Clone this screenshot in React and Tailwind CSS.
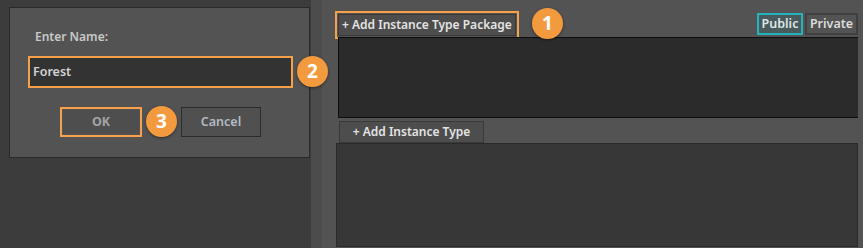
import React from 'react';

const font = { fontFamily: '"Noto Sans", "Open Sans", sans-serif' };

const Marker = ({ n, className }) => (
    <div
        className={`absolute w-[31px] h-[31px] rounded-full bg-[#f49a3e] text-white font-bold text-[19px] leading-none flex items-center justify-center shadow-[0_1px_3px_rgba(0,0,0,0.45)] ${className}`}
    >
        {n}
    </div>
);

const App = () => {
    return (
        <div className="relative w-[863px] h-[248px] flex bg-[#3c3c3c] overflow-hidden select-none" style={font}>
            {/* Name dialog */}
            <div className="w-[311px] shrink-0 pl-[9px] pt-[7px]">
                <div className="w-[301px] h-[151px] bg-[#535353] border border-[#2a2a2a] flex flex-col">
                    <div className="pl-[25px] pt-[21px] text-[12px] font-semibold text-[#c9c9c9] leading-4">Enter Name:</div>
                    <div className="ml-[18px] mt-[11px] w-[265px] h-[32px] border-2 border-[#f5a04a] bg-[#333333] flex items-center pl-[3px] text-[12.5px] font-semibold text-[#d2d2d2]">
                        Forest
                    </div>
                    <div className="flex mt-[19px] ml-[50px] gap-[39px]">
                        <div className="w-[82px] h-[30px] border-2 border-[#f5a04a] p-[1px]">
                            <div className="w-full h-full bg-[#4e4e4e] flex items-center justify-center text-[12.5px] font-bold text-[#a3a3a3]">OK</div>
                        </div>
                        <div className="w-[80px] h-[30px] border border-[#2b2b2b] bg-[#505050] flex items-center justify-center text-[12.5px] font-semibold text-[#b4bbc2]">
                            Cancel
                        </div>
                    </div>
                </div>
            </div>

            {/* splitter */}
            <div className="w-[11px] shrink-0 bg-[#4c4c4c]" />

            {/* Instance type panels */}
            <div className="flex-1 bg-[#535353] pl-[16px] pr-[5px] flex flex-col">
                <div className="flex items-end h-[37px]">
                    <div className="ml-[-3px] mb-[-2px] border-2 border-[#f5a04a] p-[1px]">
                        <div className="h-[22px] px-[3px] bg-[#4d4d4d] border border-[#3a3a3a] flex items-center text-[12px] font-semibold text-[#e4e4e4] whitespace-nowrap">
                            + Add Instance Type Package
                        </div>
                    </div>
                    <div className="ml-auto flex gap-[2px] mb-[2px]">
                        <div className="w-[46px] h-[22px] border-2 border-[#22b3bd] bg-[#485a5b] flex items-center justify-center text-[12.5px] font-semibold text-[#dfe6e6]">
                            Public
                        </div>
                        <div className="w-[53px] h-[22px] border-2 border-[#404040] bg-[#535353] flex items-center justify-center text-[12.5px] font-semibold text-[#dcdcdc]">
                            Private
                        </div>
                    </div>
                </div>
                <div className="h-[81px] bg-[#2b2b2b] border border-[#0e0e0e] border-r-0" />
                <div className="mt-[3px] ml-[1px] w-[145px] h-[22px] border border-[#3a3a3a] bg-[#4d4d4d] flex items-center justify-center text-[12px] font-semibold text-[#e4e4e4]">
                    + Add Instance Type
                </div>
                <div className="ml-[-2px] h-[104px] bg-[#373737] border border-[#2a2a2a]" />
            </div>

            <Marker n="1" className="left-[532px] top-[8px]" />
            <Marker n="2" className="left-[297px] top-[56px]" />
            <Marker n="3" className="left-[146px] top-[106px]" />
        </div>
    );
};

export default App;
